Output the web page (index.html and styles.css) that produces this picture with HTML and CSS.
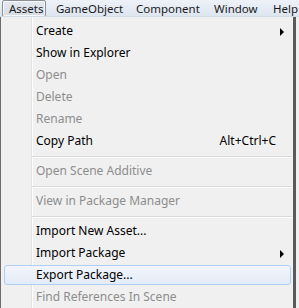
FILE: index.html
```html
<!DOCTYPE html>
<html lang="en">
<head>
    <meta charset="UTF-8">
    <title>Assets menu</title>
    <link rel="stylesheet" href="styles.css">
</head>
<body>
    <div class="menubar">
        <span class="bar-item active item-assets">Assets</span>
        <span class="bar-item item-gameobject">GameObject</span>
        <span class="bar-item item-component">Component</span>
        <span class="bar-item item-window">Window</span>
        <span class="bar-item item-help">Help</span>
    </div>
    <div class="menu">
        <div class="row">Create<span class="arrow"></span></div>
        <div class="row">Show in Explorer</div>
        <div class="row disabled">Open</div>
        <div class="row disabled">Delete</div>
        <div class="row disabled">Rename</div>
        <div class="row">Copy Path<span class="shortcut">Alt+Ctrl+C</span></div>
        <div class="sep"></div>
        <div class="row disabled">Open Scene Additive</div>
        <div class="sep"></div>
        <div class="row disabled">View in Package Manager</div>
        <div class="sep"></div>
        <div class="row">Import New Asset...</div>
        <div class="row">Import Package<span class="arrow"></span></div>
        <div class="row hover">Export Package...</div>
        <div class="row disabled">Find References In Scene</div>
    </div>
</body>
</html>
```

FILE: styles.css
```css
body {
    margin: 0;
    padding: 0;
    width: 299px;
    height: 308px;
    overflow: hidden;
    background-color: #f0f0f0;
    font-family: "Noto Sans", "Open Sans", sans-serif;
    font-size: 12px;
    color: #000;
}

.menubar {
    height: 17px;
    display: flex;
    align-items: center;
    background: linear-gradient(#eef2f8, #dde5f0);
    border-bottom: 1px solid #d5dbe5;
    box-sizing: border-box;
    padding-left: 2px;
    overflow: hidden;
}

.bar-item {
    flex: none;
    box-sizing: border-box;
    line-height: 15px;
    padding-left: 6px;
    border: 1px solid transparent;
    color: #1a1a1a;
    font-size: 11.5px;
    white-space: nowrap;
}

.item-assets { width: 44px; }
.item-gameobject { width: 80px; margin-left: 3px; }
.item-component { width: 78px; }
.item-window { width: 59px; }
.item-help { width: 31px; }

.bar-item.active {
    border-color: #8a8f96;
    border-radius: 2px;
    background: linear-gradient(#e4e9ef, #d6dce4);
    box-shadow: inset 0 0 0 1px #f6f8fb;
}

.menu {
    width: 296px;
    height: 291px;
    box-sizing: border-box;
    border-left: 1px solid #6c6c6c;
    border-right: 3px solid #5a5a5a;
    padding-top: 3px;
    background:
        linear-gradient(to right, transparent 30px, #e2e3e3 30px, #e2e3e3 31px, #ffffff 31px, #ffffff 32px, transparent 32px),
        #f0f0f0;
}

.row {
    position: relative;
    height: 22px;
    line-height: 22px;
    padding-left: 35px;
    white-space: nowrap;
}

.row.disabled {
    color: #8d8d8d;
}

.row.hover {
    margin: 1px 2px 1px 3px;
    height: 18px;
    line-height: 18px;
    padding-left: 31px;
    border: 1px solid #aecff3;
    border-radius: 3px;
    background: linear-gradient(#f2f6fb, #e3ebf7);
}

.shortcut {
    position: absolute;
    right: 17px;
    top: 0;
}

.arrow {
    position: absolute;
    right: 9px;
    top: 8px;
    width: 0;
    height: 0;
    border-top: 4px solid transparent;
    border-bottom: 4px solid transparent;
    border-left: 4px solid #000;
}

.sep {
    height: 8px;
    margin-left: 31px;
    margin-right: 1px;
    background: linear-gradient(transparent 4px, #dadada 4px, #dadada 5px, #ffffff 5px, #ffffff 6px, transparent 6px);
}
```
